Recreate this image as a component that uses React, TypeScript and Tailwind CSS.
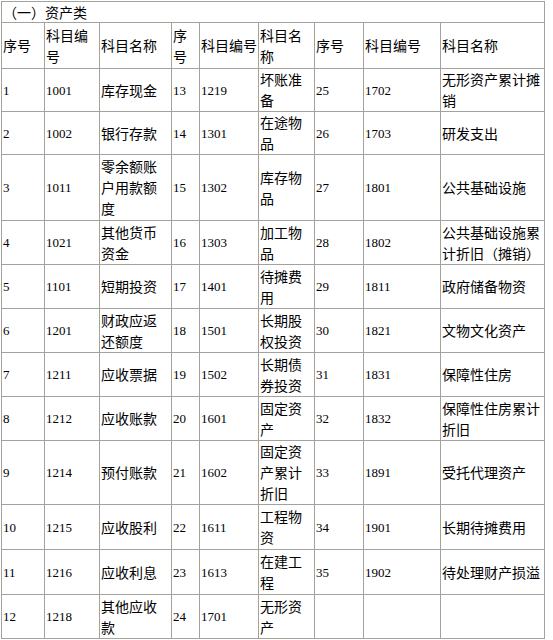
import React from 'react';

type Cell = string | string[];

const header: Cell[] = [
  '序号',
  ['科目编', '号'],
  '科目名称',
  ['序', '号'],
  '科目编号',
  ['科目名', '称'],
  '序号',
  '科目编号',
  '科目名称',
];

const rows: { h: string; cells: Cell[] }[] = [
  { h: 'h-[43px]', cells: ['1', '1001', '库存现金', '13', '1219', ['坏账准', '备'], '25', '1702', ['无形资产累计摊', '销']] },
  { h: 'h-[43px]', cells: ['2', '1002', '银行存款', '14', '1301', ['在途物', '品'], '26', '1703', '研发支出'] },
  { h: 'h-[66px]', cells: ['3', '1011', ['零余额账', '户用款额', '度'], '15', '1302', ['库存物', '品'], '27', '1801', '公共基础设施'] },
  { h: 'h-[44px]', cells: ['4', '1021', ['其他货币', '资金'], '16', '1303', ['加工物', '品'], '28', '1802', ['公共基础设施累', '计折旧（摊销）']] },
  { h: 'h-[44px]', cells: ['5', '1101', '短期投资', '17', '1401', ['待摊费', '用'], '29', '1811', '政府储备物资'] },
  { h: 'h-[44px]', cells: ['6', '1201', ['财政应返', '还额度'], '18', '1501', ['长期股', '权投资'], '30', '1821', '文物文化资产'] },
  { h: 'h-[44px]', cells: ['7', '1211', '应收票据', '19', '1502', ['长期债', '券投资'], '31', '1831', '保障性住房'] },
  { h: 'h-[44px]', cells: ['8', '1212', '应收账款', '20', '1601', ['固定资', '产'], '32', '1832', ['保障性住房累计', '折旧']] },
  { h: 'h-[62px]', cells: ['9', '1214', '预付账款', '21', '1602', ['固定资', '产累计', '折旧'], '33', '1891', '受托代理资产'] },
  { h: 'h-[45px]', cells: ['10', '1215', '应收股利', '22', '1611', ['工程物', '资'], '34', '1901', '长期待摊费用'] },
  { h: 'h-[45px]', cells: ['11', '1216', '应收利息', '23', '1613', ['在建工', '程'], '35', '1902', '待处理财产损溢'] },
  { h: 'h-[44px]', cells: ['12', '1218', ['其他应收', '款'], '24', '1701', ['无形资', '产'], '', '', ''] },
];

function TableCell({ value }: { value: Cell }) {
  const lines = Array.isArray(value) ? value : [value];
  const numeric = lines.length === 1 && /^\d+$/.test(lines[0]);

  return (
    <td
      className={`border border-[#a3a39b] px-px align-middle whitespace-nowrap overflow-hidden ${
        numeric ? 'text-[13px]' : 'text-[14px]'
      }`}
      style={
        numeric
          ? { fontFamily: "'Liberation Serif', serif" }
          : undefined
      }
    >
      {lines.map((line, i) => (
        <div key={i} className="leading-[21px]">
          {line}
        </div>
      ))}
    </td>
  );
}

export default function App() {
  return (
    <div
      className="min-h-screen bg-white pl-px pt-px text-black"
      style={{
        fontFamily:
          "'Noto Sans CJK SC', 'Liberation Sans', sans-serif",
      }}
    >
      <table className="table-fixed border-collapse w-[543px] border border-[#7c7c76]">
        <colgroup>
          <col className="w-[43px]" />
          <col className="w-[55px]" />
          <col className="w-[72px]" />
          <col className="w-[28px]" />
          <col className="w-[59px]" />
          <col className="w-[56px]" />
          <col className="w-[49px]" />
          <col className="w-[77px]" />
          <col className="w-[104px]" />
        </colgroup>
        <tbody>
          <tr className="h-[21px]">
            <td
              colSpan={9}
              className="border border-[#a3a39b] px-px text-[14px] leading-[20px] align-middle"
            >
              （一）资产类
            </td>
          </tr>

          <tr className="h-[46px]">
            {header.map((cell, i) => (
              <TableCell key={i} value={cell} />
            ))}
          </tr>

          {rows.map((row, r) => (
            <tr key={r} className={row.h}>
              {row.cells.map((cell, i) => (
                <TableCell key={i} value={cell} />
              ))}
            </tr>
          ))}
        </tbody>
      </table>
    </div>
  );
}
